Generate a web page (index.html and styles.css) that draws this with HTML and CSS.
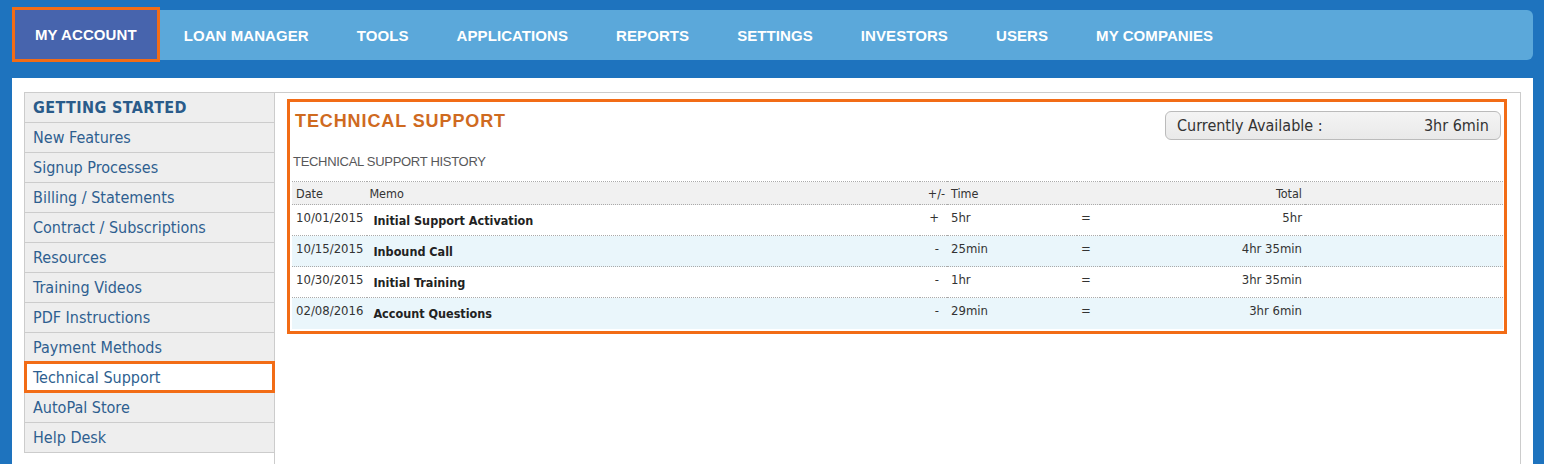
FILE: index.html
```html
<!DOCTYPE html>
<html>

<head>
    <title>My Account - Technical Support</title>
    <link rel="stylesheet" href="styles.css">
</head>

<body>

    <div class="topnav">
        <a href="#" class="navitem active">MY ACCOUNT</a>
        <a href="#" class="navitem">LOAN MANAGER</a>
        <a href="#" class="navitem">TOOLS</a>
        <a href="#" class="navitem">APPLICATIONS</a>
        <a href="#" class="navitem">REPORTS</a>
        <a href="#" class="navitem">SETTINGS</a>
        <a href="#" class="navitem">INVESTORS</a>
        <a href="#" class="navitem">USERS</a>
        <a href="#" class="navitem">MY COMPANIES</a>
    </div>

    <div class="page">
        <div class="sidebar">
            <div class="sideHead">GETTING STARTED</div>
            <a href="#" class="sideItem">New Features</a>
            <a href="#" class="sideItem">Signup Processes</a>
            <a href="#" class="sideItem">Billing / Statements</a>
            <a href="#" class="sideItem">Contract / Subscriptions</a>
            <a href="#" class="sideItem">Resources</a>
            <a href="#" class="sideItem">Training Videos</a>
            <a href="#" class="sideItem">PDF Instructions</a>
            <a href="#" class="sideItem">Payment Methods</a>
            <a href="#" class="sideItem current">Technical Support</a>
            <a href="#" class="sideItem">AutoPal Store</a>
            <a href="#" class="sideItem">Help Desk</a>
        </div>

        <div class="panel">
            <div class="supportBox">
                <div class="supportTop">
                    <h1 class="supportTitle">TECHNICAL SUPPORT</h1>
                    <div class="available">
                        <span>Currently Available :</span>
                        <span>3hr 6min</span>
                    </div>
                </div>

                <h3 class="historyTitle">TECHNICAL SUPPORT HISTORY</h3>

                <table class="history">
                    <colgroup>
                        <col class="cDate">
                        <col>
                        <col class="cSign">
                        <col class="cTime">
                        <col class="cEq">
                        <col class="cTotal">
                        <col class="cRest">
                    </colgroup>
                    <tr class="headRow">
                        <th>Date</th>
                        <th class="memoHead">Memo</th>
                        <th class="sign">+/-</th>
                        <th>Time</th>
                        <th></th>
                        <th class="total">Total</th>
                        <th></th>
                    </tr>
                    <tr>
                        <td>10/01/2015</td>
                        <td class="memo">Initial Support Activation</td>
                        <td class="sign">+</td>
                        <td>5hr</td>
                        <td class="eq">=</td>
                        <td class="total">5hr</td>
                        <td></td>
                    </tr>
                    <tr class="alt">
                        <td>10/15/2015</td>
                        <td class="memo">Inbound Call</td>
                        <td class="sign">-</td>
                        <td>25min</td>
                        <td class="eq">=</td>
                        <td class="total">4hr 35min</td>
                        <td></td>
                    </tr>
                    <tr>
                        <td>10/30/2015</td>
                        <td class="memo">Initial Training</td>
                        <td class="sign">-</td>
                        <td>1hr</td>
                        <td class="eq">=</td>
                        <td class="total">3hr 35min</td>
                        <td></td>
                    </tr>
                    <tr class="alt">
                        <td>02/08/2016</td>
                        <td class="memo">Account Questions</td>
                        <td class="sign">-</td>
                        <td>29min</td>
                        <td class="eq">=</td>
                        <td class="total">3hr 6min</td>
                        <td></td>
                    </tr>
                </table>
            </div>
        </div>
    </div>

</body>

</html>
```

FILE: styles.css
```css
* {
    box-sizing: border-box
}

body {
    margin: 0;
    background-color: #1e73be;
    font-family: "DejaVu Sans Condensed", "DejaVu Sans", sans-serif;
    font-stretch: condensed;
    color: #333;
}

a {
    text-decoration: none;
}

/* top menu */
.topnav {
    display: flex;
    align-items: center;
    height: 50px;
    margin: 10px 11px 0 12px;
    background-color: #5ba8da;
    border-radius: 0 6px 6px 0;
}

.navitem {
    display: flex;
    align-items: center;
    height: 50px;
    padding: 0 24px;
    color: #fff;
    font-family: "Liberation Sans", Arial, sans-serif;
    font-stretch: normal;
    font-weight: bold;
    font-size: 15px;
    letter-spacing: 0.08px;
}

.navitem.active {
    height: 55px;
    margin: -1px 0 0 0;
    padding: 0 20px;
    background-color: #4764ad;
    border: 3px solid #f26c16;
}

/* page body */
.page {
    display: flex;
    min-height: 400px;
    margin: 18px 11px 0 12px;
    padding: 14px 12px 0 12px;
    background-color: #fff;
}

.sidebar {
    width: 250px;
    align-self: flex-start;
    background-color: #eee;
    border: 1px solid #ccc;
    border-right: none;
    border-bottom: none;
}

.sideHead,
.sideItem {
    display: flex;
    align-items: center;
    height: 30px;
    padding: 0 8px;
    border-bottom: 1px solid #ccc;
    color: #2e5f90;
    font-size: 16px;
}

.sideHead {
    font-weight: bold;
    color: #2a5b8a;
    letter-spacing: 0.4px;
}

.sideItem.current {
    position: relative;
    height: 32px;
    margin: -2px -1px 0 -1px;
    padding: 0 6px;
    background-color: #fff;
    border: 3px solid #f26c16;
}

.panel {
    flex: 1;
    padding: 6px 13px 0 12px;
    border-top: 1px solid #ccc;
    border-left: 1px solid #ccc;
    border-right: 1px solid #ccc;
}

.supportBox {
    padding: 0 1px 2px 2px;
    border: 3px solid #f26c16;
}

.supportTop {
    display: flex;
    justify-content: space-between;
    align-items: flex-start;
}

.supportTitle {
    margin: 9px 0 0 3px;
    color: #cf6a1f;
    font-family: "Liberation Sans", Arial, sans-serif;
    font-stretch: normal;
    font-size: 18px;
    letter-spacing: 0.9px;
}

.available {
    display: flex;
    justify-content: space-between;
    width: 336px;
    height: 29px;
    margin: 9px 2px 0 0;
    padding: 4px 11px 0 11px;
    background: linear-gradient(#f4f4f4, #e9e9e9);
    border: 1px solid #bbb;
    border-radius: 6px;
    font-size: 16px;
    color: #333;
}

.historyTitle {
    margin: 14px 0 12px 1px;
    color: #58585a;
    font-family: "Liberation Sans", Arial, sans-serif;
    font-stretch: normal;
    font-weight: normal;
    font-size: 13px;
    letter-spacing: -0.3px;
}

.history {
    width: 100%;
    border-collapse: collapse;
    font-size: 13px;
}

.cDate {
    width: 71px;
}

.cSign {
    width: 27px;
}

.cTime {
    width: 130px;
}

.cEq {
    width: 23px;
}

.cTotal {
    width: 205px;
}

.cRest {
    width: 198px;
}

.history th {
    height: 23px;
    padding: 0 4px;
    background-color: #f1f1f1;
    border-top: 1px dotted #aaa;
    border-bottom: 1px dotted #aaa;
    font-weight: normal;
    font-size: 12.5px;
    text-align: left;
}

.history th.memoHead {
    padding-left: 2px;
}

.history td {
    height: 31px;
    padding: 5px 4px 0 4px;
    vertical-align: top;
    border-bottom: 1px dotted #aaa;
}

.history tr:last-child td {
    border-bottom: none;
}

.history .alt td {
    background-color: #eaf6fb;
}

.history .memo {
    padding: 8px 4px 0 6px;
    font-weight: bold;
    font-size: 12.5px;
    color: #222;
}

.history .sign {
    padding-right: 8px;
    text-align: right;
}

.history th.sign {
    padding-right: 2px;
}

.history .eq {
    text-align: left;
}

.history .total {
    padding-right: 3px;
    text-align: right;
}
```
